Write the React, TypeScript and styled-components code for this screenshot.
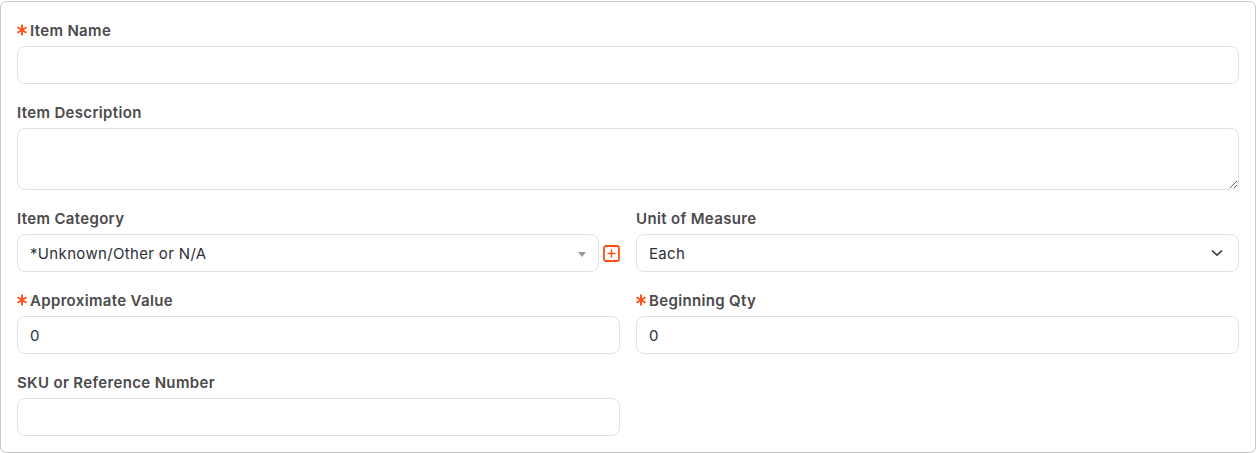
import React from 'react';
import styled, { createGlobalStyle } from 'styled-components';

const fontStack = `Inter, "Noto Sans", "Liberation Sans", sans-serif`;

const GlobalStyle = createGlobalStyle`
  html, body { margin: 0; padding: 0; background: #fff; }
  body { font-family: ${fontStack}; }
  * { box-sizing: border-box; }
`;

const Card = styled.form`
  width: 1256px;
  height: 452px;
  margin-top: 1px;
  padding: 16px 16px 0;
  background: #fff;
  border: 1px solid #c9c9c9;
  border-radius: 6px;
  display: grid;
  grid-template-columns: 603px 603px;
  column-gap: 16px;
  grid-auto-rows: min-content;
  row-gap: 16px;
`;

const Field = styled.div<{ $wide?: boolean }>`
  grid-column: ${(p) => (p.$wide ? '1 / -1' : 'auto')};
  min-width: 0;
`;

const Label = styled.label`
  display: flex;
  align-items: center;
  height: 24px;
  margin-bottom: 4px;
  font-size: 15px;
  font-weight: 600;
  letter-spacing: 0.34px;
  color: #4a4a4a;
  white-space: nowrap;
`;

const Star = styled.svg`
  width: 10px;
  height: 12px;
  margin-right: 3px;
  color: #ff4f17;
  flex: none;
`;

const controlStyle = `
  display: block;
  width: 100%;
  background: #fff;
  border: 1px solid #e1e1e6;
  border-radius: 8px;
  padding: 0 12px;
  font-family: ${fontStack};
  font-size: 15px;
  letter-spacing: 0.34px;
  color: #2c3138;
  outline: none;
`;

const Input = styled.input`
  ${controlStyle}
  height: 38px;
`;

const TextArea = styled.textarea`
  ${controlStyle}
  height: 62px;
  padding: 8px 12px;
  resize: vertical;
`;

const CategoryRow = styled.div`
  display: flex;
  align-items: center;
  gap: 4px;
`;

const Combo = styled.div`
  ${controlStyle}
  flex: 1;
  height: 38px;
  display: flex;
  align-items: center;
  justify-content: space-between;
  padding-right: 12px;
`;

const Caret = styled.span`
  width: 0;
  height: 0;
  border-left: 4px solid transparent;
  border-right: 4px solid transparent;
  border-top: 5px solid #9a9a9a;
  margin-top: 2px;
`;

const AddButton = styled.button`
  width: 17px;
  height: 17px;
  padding: 0;
  border: 0;
  background: none;
  display: flex;
  color: #ff4f17;
  cursor: pointer;
`;

const SelectWrap = styled.div`
  ${controlStyle}
  height: 38px;
  display: flex;
  align-items: center;
  justify-content: space-between;
  padding-right: 15px;
`;

const Required = () => (
  <Star viewBox="0 0 10 12" fill="none">
    <path d="M5 0.5 V11.5 M0.5 3.3 L9.5 8.7 M9.5 3.3 L0.5 8.7" stroke="currentColor" strokeWidth="1.9" />
  </Star>
);

const Chevron = () => (
  <svg width="12" height="8" viewBox="0 0 12 8" fill="none">
    <path d="M1 1.5 L6 6.2 L11 1.5" stroke="#3c4148" strokeWidth="1.7" />
  </svg>
);

const PlusBox = () => (
  <svg width="17" height="17" viewBox="0 0 17 17" fill="none">
    <rect x="1" y="1" width="15" height="15" rx="2" stroke="currentColor" strokeWidth="1.8" />
    <path d="M8.5 4.5 V12.5 M4.5 8.5 H12.5" stroke="currentColor" strokeWidth="1.4" />
  </svg>
);

export default function App() {
  return (
    <>
      <GlobalStyle />
      <Card>
        <Field $wide>
          <Label><Required />Item Name</Label>
          <Input />
        </Field>
        <Field $wide>
          <Label>Item Description</Label>
          <TextArea />
        </Field>
        <Field>
          <Label>Item Category</Label>
          <CategoryRow>
            <Combo>
              *Unknown/Other or N/A
              <Caret />
            </Combo>
            <AddButton type="button"><PlusBox /></AddButton>
          </CategoryRow>
        </Field>
        <Field>
          <Label>Unit of Measure</Label>
          <SelectWrap>
            Each
            <Chevron />
          </SelectWrap>
        </Field>
        <Field>
          <Label><Required />Approximate Value</Label>
          <Input defaultValue="0" />
        </Field>
        <Field>
          <Label><Required />Beginning Qty</Label>
          <Input defaultValue="0" />
        </Field>
        <Field>
          <Label>SKU or Reference Number</Label>
          <Input />
        </Field>
      </Card>
    </>
  );
}
